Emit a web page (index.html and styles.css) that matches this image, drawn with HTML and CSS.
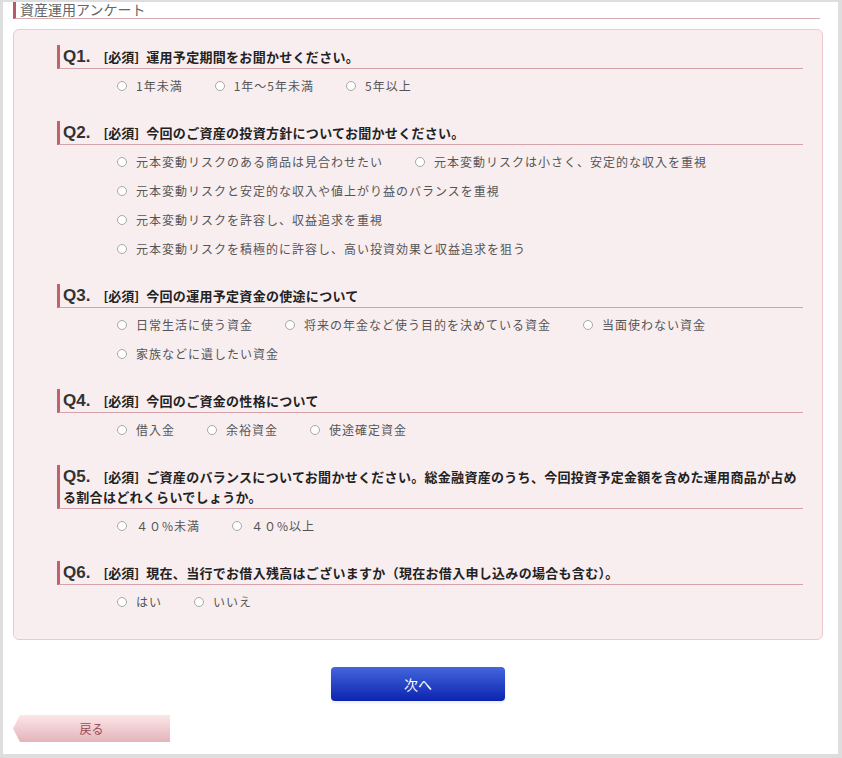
FILE: index.html
```html
<!DOCTYPE html>
<html lang="ja">
<head>
    <meta charset="UTF-8">
    <meta name="viewport" content="width=device-width, initial-scale=1.0">
    <title>資産運用アンケート</title>
    <link rel="stylesheet" href="styles.css">
</head>
<body>
    <div class="page">
        <h1 class="page-title">資産運用アンケート</h1>

        <!-- Questionnaire -->
        <div class="survey-box">
            <div class="question">
                <h2 class="q-head"><span class="q-no">Q1.</span><span class="req">[必須]</span>運用予定期間をお聞かせください。</h2>
                <div class="options">
                    <div class="opt-row">
                        <label class="opt"><span class="radio"></span>1年未満</label>
                        <label class="opt"><span class="radio"></span>1年～5年未満</label>
                        <label class="opt"><span class="radio"></span>5年以上</label>
                    </div>
                </div>
            </div>

            <div class="question">
                <h2 class="q-head"><span class="q-no">Q2.</span><span class="req">[必須]</span>今回のご資産の投資方針についてお聞かせください。</h2>
                <div class="options">
                    <div class="opt-row">
                        <label class="opt"><span class="radio"></span>元本変動リスクのある商品は見合わせたい</label>
                        <label class="opt"><span class="radio"></span>元本変動リスクは小さく、安定的な収入を重視</label>
                    </div>
                    <div class="opt-row">
                        <label class="opt"><span class="radio"></span>元本変動リスクと安定的な収入や値上がり益のバランスを重視</label>
                    </div>
                    <div class="opt-row">
                        <label class="opt"><span class="radio"></span>元本変動リスクを許容し、収益追求を重視</label>
                    </div>
                    <div class="opt-row">
                        <label class="opt"><span class="radio"></span>元本変動リスクを積極的に許容し、高い投資効果と収益追求を狙う</label>
                    </div>
                </div>
            </div>

            <div class="question">
                <h2 class="q-head"><span class="q-no">Q3.</span><span class="req">[必須]</span>今回の運用予定資金の使途について</h2>
                <div class="options">
                    <div class="opt-row">
                        <label class="opt"><span class="radio"></span>日常生活に使う資金</label>
                        <label class="opt"><span class="radio"></span>将来の年金など使う目的を決めている資金</label>
                        <label class="opt"><span class="radio"></span>当面使わない資金</label>
                    </div>
                    <div class="opt-row">
                        <label class="opt"><span class="radio"></span>家族などに遺したい資金</label>
                    </div>
                </div>
            </div>

            <div class="question">
                <h2 class="q-head"><span class="q-no">Q4.</span><span class="req">[必須]</span>今回のご資金の性格について</h2>
                <div class="options">
                    <div class="opt-row">
                        <label class="opt"><span class="radio"></span>借入金</label>
                        <label class="opt"><span class="radio"></span>余裕資金</label>
                        <label class="opt"><span class="radio"></span>使途確定資金</label>
                    </div>
                </div>
            </div>

            <div class="question">
                <h2 class="q-head"><span class="q-no">Q5.</span><span class="req">[必須]</span>ご資産のバランスについてお聞かせください。総金融資産のうち、今回投資予定金額を含めた運用商品が占める割合はどれくらいでしょうか。</h2>
                <div class="options">
                    <div class="opt-row">
                        <label class="opt"><span class="radio"></span>４０%未満</label>
                        <label class="opt"><span class="radio"></span>４０%以上</label>
                    </div>
                </div>
            </div>

            <div class="question">
                <h2 class="q-head"><span class="q-no">Q6.</span><span class="req">[必須]</span>現在、当行でお借入残高はございますか（現在お借入申し込みの場合も含む）。</h2>
                <div class="options">
                    <div class="opt-row">
                        <label class="opt"><span class="radio"></span>はい</label>
                        <label class="opt"><span class="radio"></span>いいえ</label>
                    </div>
                </div>
            </div>
        </div>

        <!-- Buttons -->
        <div class="btn-area">
            <a href="#" class="btn-next">次へ</a>
        </div>
        <div class="back-area">
            <a href="#" class="btn-back">戻る</a>
        </div>
    </div>
</body>
</html>
```

FILE: styles.css
```css
/* ===== Base ===== */
body {
    margin: 0;
    padding: 0;
    font-family: "Noto Sans CJK JP", "Noto Sans", sans-serif;
    color: #333;
    background: #fff;
}

/* Gray frame around the page */
.page {
    box-sizing: border-box;
    width: 842px;
    height: 758px;
    border-style: solid;
    border-color: #dedede;
    border-width: 2px 4px 4px 3px;
    overflow: hidden;
    background: #fff;
}

/* ===== Page Title ===== */
.page-title {
    margin: -2px 18px 0 10px;
    padding-left: 4px;
    font-size: 14px;
    font-weight: normal;
    line-height: 18px;
    color: #666;
    border-left: 3px solid #b85a66;
    border-bottom: 1px solid #d5adb3;
}

/* ===== Survey Box ===== */
.survey-box {
    box-sizing: border-box;
    margin: 10px 15px 0 10px;
    padding: 15px 19px 2px 43px;
    background: #f8eef0;
    border: 1px solid #efc8ce;
    border-radius: 6px;
}

.question {
    margin-bottom: 21px;
}

/* Question heading */
.q-head {
    margin: 0;
    padding: 2px 0 1px 3px;
    font-size: 13px;
    font-weight: bold;
    line-height: 20px;
    letter-spacing: 0.3px;
    color: #222;
    border-left: 3px solid #c0626c;
    border-bottom: 1px solid #d7a3ab;
}

.q-no {
    font-family: "Liberation Sans", Arial, sans-serif;
    font-size: 17px;
    line-height: 1;
    letter-spacing: 0;
    color: #333;
    margin-right: 13px;
}

.req {
    letter-spacing: 0;
    margin-right: 7px;
}

/* ===== Options ===== */
.options {
    margin: 2px 0 0 60px;
}

.opt-row {
    display: flex;
    height: 29px;
    align-items: center;
}

.opt {
    display: flex;
    align-items: center;
    margin-right: 32px;
    font-size: 12px;
    letter-spacing: 1px;
    color: #555;
    white-space: nowrap;
}

.radio {
    box-sizing: border-box;
    width: 10px;
    height: 10px;
    margin-right: 9px;
    border: 1px solid #a8a8a8;
    border-radius: 50%;
    background: #fff;
}

/* ===== Buttons ===== */
.btn-area {
    display: flex;
    justify-content: center;
    margin: 27px 15px 0 10px;
}

.btn-next {
    display: block;
    width: 174px;
    height: 34px;
    line-height: 34px;
    text-align: center;
    font-size: 14px;
    color: #fff;
    text-decoration: none;
    background: linear-gradient(#4466dc, #0b24b0);
    border-radius: 4px;
    box-shadow: 0 2px 3px rgba(0, 0, 0, 0.08);
}

.back-area {
    margin: 14px 0 0 10px;
}

.btn-back {
    display: block;
    width: 157px;
    height: 27px;
    line-height: 27px;
    text-align: center;
    font-size: 12px;
    color: #9a4a55;
    text-decoration: none;
    background: linear-gradient(#fce6e8, #e4b4ba);
    clip-path: polygon(7px 0, 100% 0, 100% 100%, 7px 100%, 0 50%);
}
```
